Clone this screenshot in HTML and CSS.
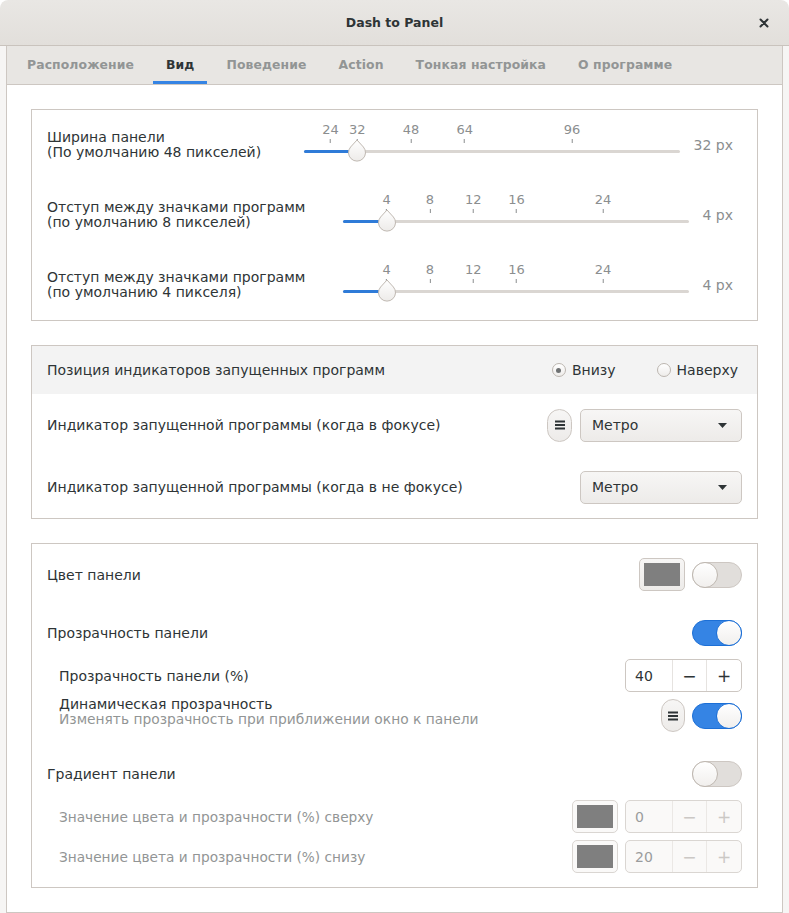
FILE: index.html
```html
<!DOCTYPE html>
<html lang="ru">
<head>
<meta charset="utf-8">
<title>Dash to Panel</title>
<link rel="stylesheet" href="styles.css">
</head>
<body>
<div class="window">
  <header class="titlebar">
    <span></span>
    <span class="title">Dash to Panel</span>
    <span class="close" aria-label="Закрыть">
      <svg width="10" height="10" viewBox="0 0 10 10"><path d="M1.5 1.5 L8.5 8.5 M8.5 1.5 L1.5 8.5" stroke="#2e3436" stroke-width="2" stroke-linecap="round"/></svg>
    </span>
  </header>
  <div class="notebook">
    <nav class="tabs">
      <span class="tab">Расположение</span>
      <span class="tab active">Вид</span>
      <span class="tab">Поведение</span>
      <span class="tab">Action</span>
      <span class="tab">Тонкая настройка</span>
      <span class="tab">О программе</span>
    </nav>
    <main class="page">
      <section class="frame">
        <div class="srow">
          <div class="label">Ширина панели<br>(По умолчанию 48 пикселей)</div>
          <div class="scale scale-wide">
            <div class="marks">
              <span class="mark" style="left:7.143%">24</span>
              <span class="mark" style="left:14.286%">32</span>
              <span class="mark" style="left:28.571%">48</span>
              <span class="mark" style="left:42.857%">64</span>
              <span class="mark" style="left:71.429%">96</span>
            </div>
            <div class="track">
              <div class="rail"></div>
              <div class="fill" style="width:14.286%"></div>
              <span class="thumb" style="left:14.286%"><svg width="21" height="23" viewBox="0 0 21 23"><defs><linearGradient id="tg1" x1="0" y1="0" x2="0" y2="1"><stop offset="0" stop-color="#ffffff"/><stop offset="1" stop-color="#edebe9"/></linearGradient></defs><path d="M10.5 1 L16.9 8 A8.5 8.5 0 1 1 4.1 8 Z" fill="url(#tg1)" stroke="#bfb8b1" stroke-width="1"/></svg></span>
            </div>
          </div>
          <span class="value">32 px</span>
        </div>
        <div class="srow">
          <div class="label">Отступ между значками программ<br>(по умолчанию 8 пикселей)</div>
          <div class="scale scale-narrow">
            <div class="marks">
              <span class="mark" style="left:12.5%">4</span>
              <span class="mark" style="left:25%">8</span>
              <span class="mark" style="left:37.5%">12</span>
              <span class="mark" style="left:50%">16</span>
              <span class="mark" style="left:75%">24</span>
            </div>
            <div class="track">
              <div class="rail"></div>
              <div class="fill" style="width:12.5%"></div>
              <span class="thumb" style="left:12.5%"><svg width="21" height="23" viewBox="0 0 21 23"><path d="M10.5 1 L16.9 8 A8.5 8.5 0 1 1 4.1 8 Z" fill="url(#tg1)" stroke="#bfb8b1" stroke-width="1"/></svg></span>
            </div>
          </div>
          <span class="value value-narrow">4 px</span>
        </div>
        <div class="srow">
          <div class="label">Отступ между значками программ<br>(по умолчанию 4 пикселя)</div>
          <div class="scale scale-narrow">
            <div class="marks">
              <span class="mark" style="left:12.5%">4</span>
              <span class="mark" style="left:25%">8</span>
              <span class="mark" style="left:37.5%">12</span>
              <span class="mark" style="left:50%">16</span>
              <span class="mark" style="left:75%">24</span>
            </div>
            <div class="track">
              <div class="rail"></div>
              <div class="fill" style="width:12.5%"></div>
              <span class="thumb" style="left:12.5%"><svg width="21" height="23" viewBox="0 0 21 23"><path d="M10.5 1 L16.9 8 A8.5 8.5 0 1 1 4.1 8 Z" fill="url(#tg1)" stroke="#bfb8b1" stroke-width="1"/></svg></span>
            </div>
          </div>
          <span class="value value-narrow">4 px</span>
        </div>
      </section>

      <section class="frame">
        <div class="orow orow-hl">
          <div class="label">Позиция индикаторов запущенных программ</div>
          <div class="radios">
            <label class="radio"><span class="radio-dot on"></span>Внизу</label>
            <label class="radio"><span class="radio-dot"></span>Наверху</label>
          </div>
        </div>
        <div class="orow">
          <div class="label">Индикатор запущенной программы (когда в фокусе)</div>
          <span class="pill"><svg width="10" height="10" viewBox="0 0 10 10"><path d="M0 1.5 H10 M0 5 H10 M0 8.5 H10" stroke="#2e3436" stroke-width="2"/></svg></span>
          <span class="combo">Метро<svg width="9" height="5" viewBox="0 0 9 5"><path d="M0 0 H9 L4.5 5 Z" fill="#2e3436"/></svg></span>
        </div>
        <div class="orow">
          <div class="label">Индикатор запущенной программы (когда в не фокусе)</div>
          <span class="combo">Метро<svg width="9" height="5" viewBox="0 0 9 5"><path d="M0 0 H9 L4.5 5 Z" fill="#2e3436"/></svg></span>
        </div>
      </section>

      <section class="frame frame-list">
        <div class="crow">
          <div class="label">Цвет панели</div>
          <span class="colorbtn"><span class="swatch"></span></span>
          <span class="switch"><span class="knob"></span></span>
        </div>
        <div class="crow gap-lg">
          <div class="label">Прозрачность панели</div>
          <span class="switch on"><span class="knob"></span></span>
        </div>
        <div class="crow crow-sub gap-md">
          <div class="label">Прозрачность панели (%)</div>
          <span class="spin"><span class="spin-entry">40</span><span class="spin-btn">−</span><span class="spin-btn">+</span></span>
        </div>
        <div class="crow crow-sub gap-sm">
          <div class="label label-two">Динамическая прозрачность<br><span class="sub">Изменять прозрачность при приближении окно к панели</span></div>
          <span class="pill pill-small"><svg width="10" height="10" viewBox="0 0 10 10"><path d="M0 1.5 H10 M0 5 H10 M0 8.5 H10" stroke="#2e3436" stroke-width="2"/></svg></span>
          <span class="switch on"><span class="knob"></span></span>
        </div>
        <div class="crow gap-lg">
          <div class="label">Градиент панели</div>
          <span class="switch"><span class="knob"></span></span>
        </div>
        <div class="crow crow-sub gap-md disabled">
          <div class="label">Значение цвета и прозрачности (%) сверху</div>
          <span class="colorbtn"><span class="swatch"></span></span>
          <span class="spin"><span class="spin-entry">0</span><span class="spin-btn">−</span><span class="spin-btn">+</span></span>
        </div>
        <div class="crow crow-sub gap-sm disabled">
          <div class="label">Значение цвета и прозрачности (%) снизу</div>
          <span class="colorbtn"><span class="swatch"></span></span>
          <span class="spin"><span class="spin-entry">20</span><span class="spin-btn">−</span><span class="spin-btn">+</span></span>
        </div>
      </section>
    </main>
  </div>
</div>
</body>
</html>
```

FILE: styles.css
```css
* { box-sizing: border-box; }
html, body { margin: 0; padding: 0; }
body {
  background: #ffffff;
  font-family: "DejaVu Sans", sans-serif;
  font-size: 14px;
  color: #2e3436;
}
.window {
  width: 789px;
  height: 913px;
  display: flex;
  flex-direction: column;
  background: #f6f5f4;
  border-radius: 8px 8px 0 0;
  overflow: hidden;
}
.titlebar {
  flex: none;
  height: 46px;
  display: grid;
  grid-template-columns: 1fr auto 1fr;
  align-items: center;
  background: linear-gradient(#e9e7e4, #e2dfdb);
  border-bottom: 1px solid #c9c3bd;
  border-radius: 8px 8px 0 0;
}
.title { font-weight: bold; font-size: 12.5px; }
.close { justify-self: end; margin-right: 20px; display: flex; }
.notebook {
  flex: 1;
  margin: 0 6px 6px;
  border: 1px solid #cdc7c2;
  border-top: none;
  background: #ffffff;
  display: flex;
  flex-direction: column;
}
.tabs {
  flex: none;
  height: 39px;
  display: flex;
  gap: 6px;
  padding-left: 7px;
  background: #e8e6e3;
  border-bottom: 1px solid #cdc7c2;
}
.tab {
  padding: 0 13px 2px;
  display: flex;
  align-items: center;
  font-weight: bold;
  font-size: 12.4px;
  letter-spacing: 0.1px;
  color: #929595;
}
.tab.active { color: #2e3436; box-shadow: inset 0 -3px #3584e4; }
.page {
  padding: 24px;
  display: flex;
  flex-direction: column;
  gap: 24px;
}
.frame { border: 1px solid #cdc7c2; background: #ffffff; }
.label { flex: 1; }

/* slider rows */
.srow {
  height: 70px;
  display: flex;
  align-items: center;
  padding: 0 24px 0 15px;
}
.srow .label { line-height: 15px; }
.scale { align-self: flex-start; margin-top: 13px; }
.scale-wide { width: 376px; }
.scale-narrow { width: 346px; }
.marks { position: relative; height: 20px; }
.mark {
  position: absolute;
  top: 0;
  transform: translateX(-50%);
  display: flex;
  flex-direction: column;
  align-items: center;
  font-size: 13px;
  line-height: 14px;
  color: #8b8e8f;
}
.mark::after {
  content: "";
  width: 1px;
  height: 4px;
  margin-top: 2px;
  background: #8b8e8f;
}
.track { position: relative; height: 16px; }
.rail {
  position: absolute;
  left: 0; right: 0; top: 7px;
  height: 3px;
  border-radius: 2px;
  background: #dad6d2;
}
.fill {
  position: absolute;
  left: 0; top: 7px;
  height: 3px;
  border-radius: 2px;
  background: #2f7bd8;
}
.thumb {
  position: absolute;
  top: -4px;
  width: 21px;
  height: 23px;
  transform: translateX(-50%);
  display: flex;
}
.value { margin-left: 14px; color: #8b8e8f; }
.value-narrow { margin-left: 13px; }

/* options rows */
.orow {
  height: 62px;
  display: flex;
  align-items: center;
  padding: 0 15px;
}
.orow-hl { height: 48px; background: #f3f3f3; padding-right: 19px; }
.radios { display: flex; gap: 41px; }
.radio { display: flex; align-items: center; gap: 6px; }
.radio-dot {
  width: 14px;
  height: 14px;
  border-radius: 50%;
  border: 1px solid #bcb6b0;
  background: linear-gradient(#ffffff, #eeecea);
  display: flex;
  align-items: center;
  justify-content: center;
}
.radio-dot.on::after {
  content: "";
  width: 5px;
  height: 5px;
  border-radius: 50%;
  background: #6e7172;
}
.pill {
  width: 25px;
  height: 33px;
  margin-right: 8px;
  border-radius: 13px;
  border: 1px solid #cdc7c2;
  background: linear-gradient(#f7f6f5, #edebe9);
  display: flex;
  align-items: center;
  justify-content: center;
}
.pill-small { width: 24px; margin-right: 7px; }
.combo {
  width: 162px;
  height: 33px;
  border: 1px solid #cdc7c2;
  border-radius: 5px;
  background: linear-gradient(#f7f6f5, #edebe9);
  display: flex;
  align-items: center;
  justify-content: space-between;
  padding: 0 14px 0 11px;
}

/* list rows */
.frame-list { padding: 14px 0 14px; }
.crow { display: flex; align-items: center; padding: 0 15px; }
.crow-sub { padding-left: 27px; }
.gap-lg { margin-top: 29px; }
.gap-md { margin-top: 13px; }
.gap-sm { margin-top: 7px; }
.label-two { line-height: 15px; margin-top: -7px; }
.sub { color: #929595; font-size: 13.8px; }
.colorbtn {
  width: 46px;
  height: 33px;
  margin-right: 7px;
  padding: 4px;
  border: 1px solid #cdc7c2;
  border-radius: 5px;
  background: linear-gradient(#f7f6f5, #edebe9);
  display: flex;
}
.swatch { flex: 1; background: #7f7f7f; }
.switch {
  width: 50px;
  height: 26px;
  border-radius: 13px;
  border: 1px solid #cdc7c2;
  background: #e1dedb;
  display: flex;
  align-items: center;
}
.knob {
  width: 26px;
  height: 26px;
  margin: -1px;
  border-radius: 50%;
  border: 1px solid #bfb8b1;
  background: linear-gradient(#ffffff, #f1efed);
}
.switch.on { background: #3584e4; border-color: #1c6fd6; justify-content: flex-end; }
.switch.on .knob { border-color: #1c6fd6; }
.spin {
  width: 117px;
  height: 33px;
  display: flex;
  border: 1px solid #cdc7c2;
  border-radius: 5px;
  background: #ffffff;
}
.spin-entry { width: 46px; display: flex; align-items: center; padding-left: 9px; }
.spin-btn {
  width: 35px;
  display: flex;
  align-items: center;
  justify-content: center;
  border-left: 1px solid #e6e3e0;
  font-size: 17px;
}
.disabled .label { color: #929595; font-size: 13.7px; }
.disabled .colorbtn { background: #faf9f8; border-color: #dad6d2; }
.disabled .spin { background: #faf9f8; border-color: #dad6d2; color: #9a9c9d; }
.disabled .spin-btn { color: #cbc8c5; border-left-color: #ebe8e5; }
```
